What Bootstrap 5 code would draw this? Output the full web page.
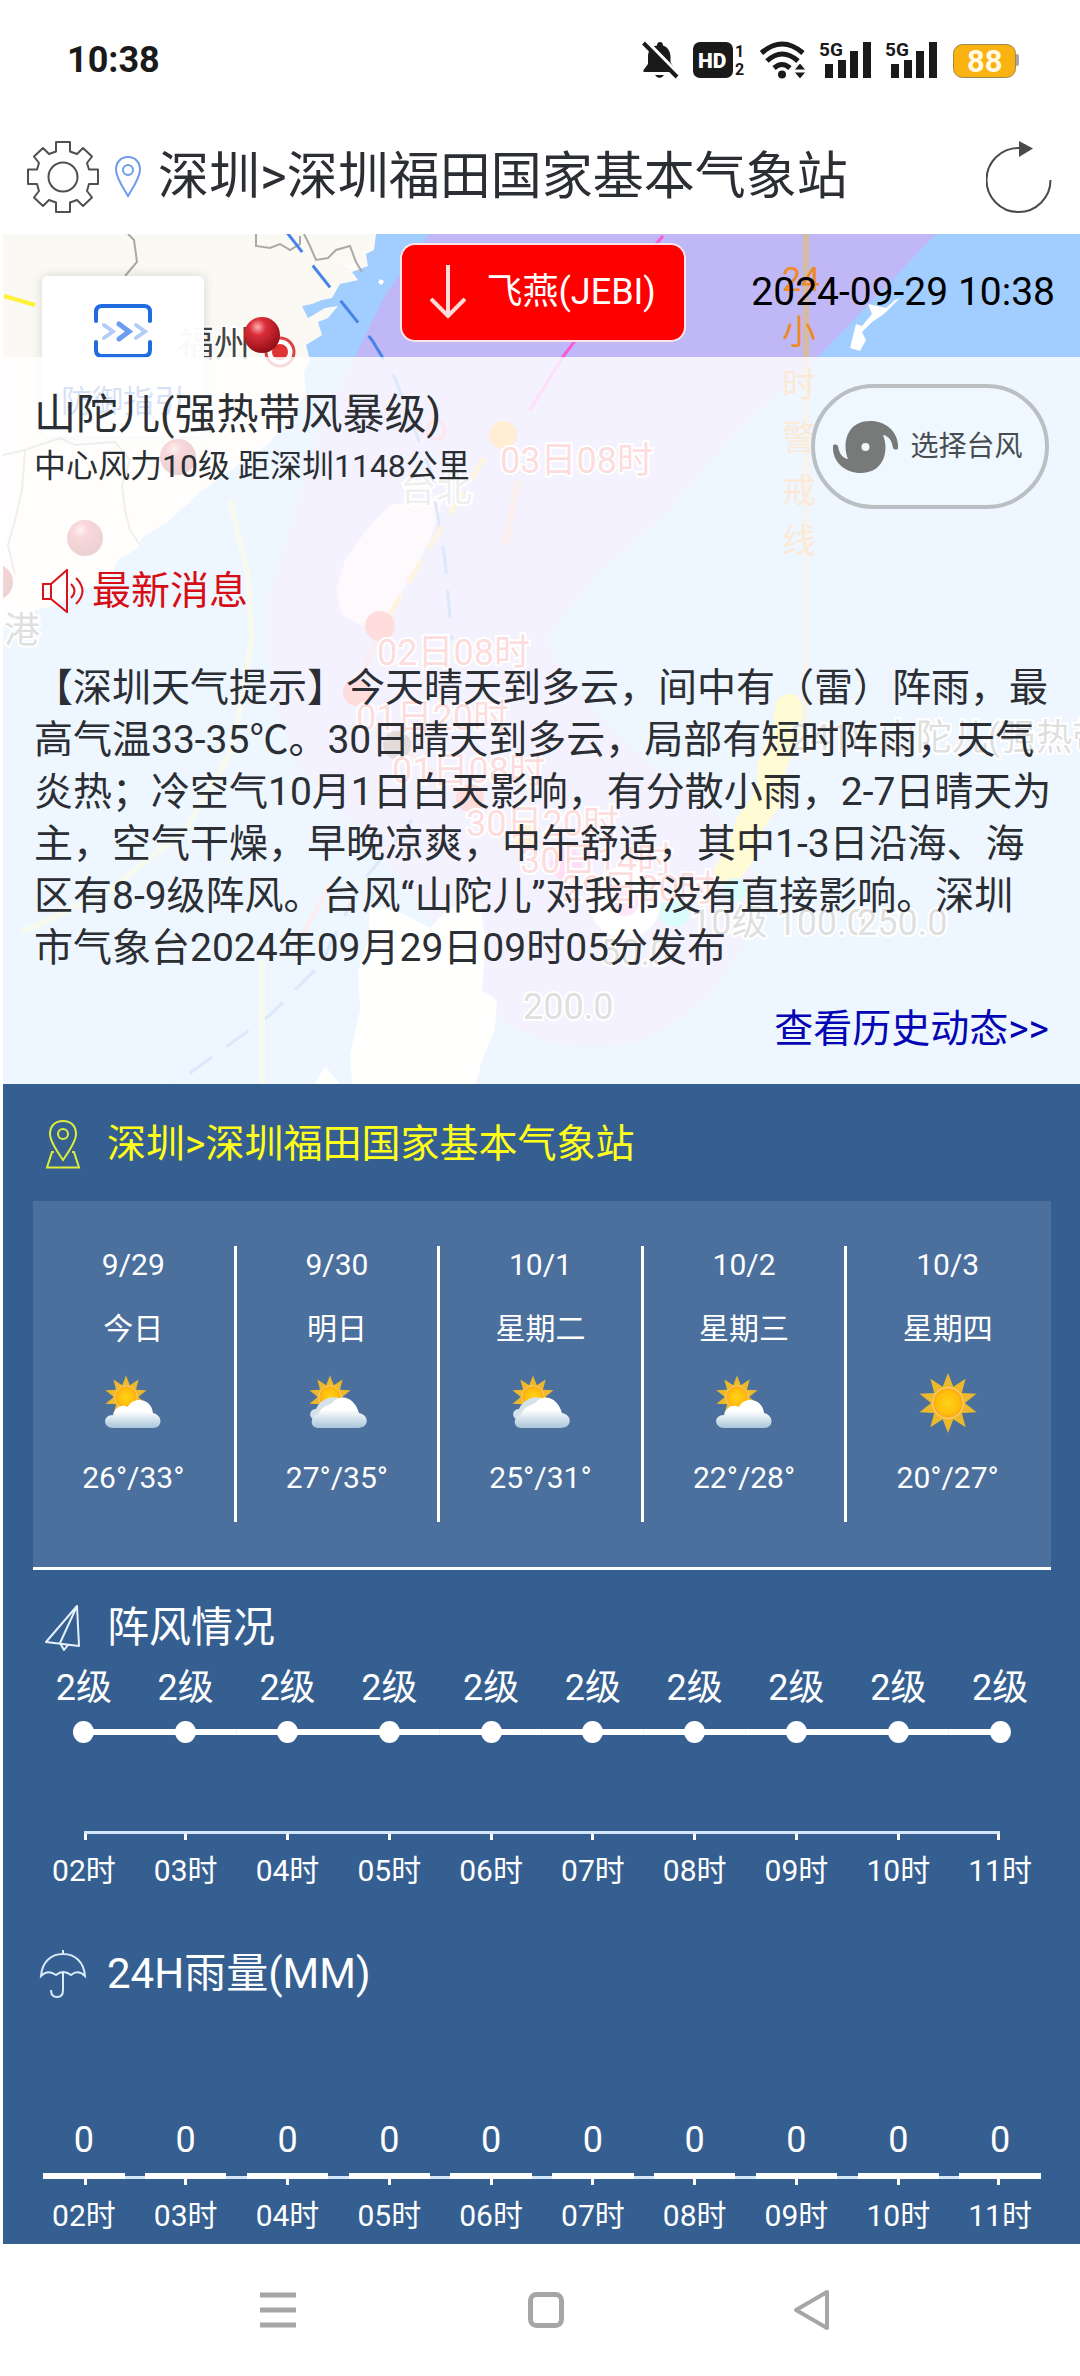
<!DOCTYPE html>
<html lang="zh-CN">
<head>
<meta charset="utf-8">
<meta name="viewport" content="width=device-width, initial-scale=1">
<title>深圳天气</title>
<link href="https://cdn.jsdelivr.net/npm/bootstrap@5.3.0/dist/css/bootstrap.min.css" rel="stylesheet">
<style>
  body { font-family: Roboto, "Noto Sans CJK SC", sans-serif; color: #2b2e33; background: #fff; }
  svg { display: block; flex: none; }
  .status-bar { min-height: 120px; padding: 0 60px 0 67px; color: #1a1a1a; }
  .clock { font-size: 36px; font-weight: 700; line-height: 44px; }
  .app-bar { min-height: 114px; padding: 0 28px 0 27px; }
  .app-title { font-size: 51px; line-height: 64px; margin: 0 0 0 17px; font-weight: 400; white-space: nowrap; }
  .bare { background: none; border: 0; padding: 0; color: inherit; }
  .app-main { margin-left: 3px; }

  .map-area { overflow: hidden; background: #a2cdff; }
  .map-art { position: absolute; inset: 0; width: 100%; height: 100%; }
  .map-head { position: relative; display: grid; grid-template-columns: 1fr auto 1fr; align-items: center; min-height: 123px; padding: 0 25px 7px 27px; }
  .storm-btn { background: #fe0000; color: #fff; border: 2px solid #ffe6e6; border-radius: 15px; min-width: 286px; min-height: 99px; padding: 0 16px 0 28px; font-size: 36px; gap: 21px; grid-column: 2; }
  .stamp { font-size: 39px; line-height: 52px; color: #000; grid-column: 3; text-align: right; white-space: nowrap; }
  .guide-card { position: absolute; left: 39px; top: 42px; width: 162px; height: 160px; border-radius: 6px; background: rgba(255,255,255,.97); box-shadow: 0 0 12px rgba(0,0,0,.15); color: #2d5fd0; font-size: 31px; line-height: 40px; padding-top: 28px; gap: 24px; text-decoration: none; }

  .news { position: relative; background: rgba(255,255,255,.81); padding: 27px 31px 29px; }
  .storm-name { font-size: 42px; line-height: 62px; font-weight: 400; margin: 0; }
  .storm-info { font-size: 32px; line-height: 40px; margin: 0; }
  .pick-btn { width: 238px; height: 125px; border: 4px solid #b9bfc2; border-radius: 63px; background: rgba(255,255,255,.1); color: #484c50; font-size: 28px; gap: 12px; padding: 0 4px 0 0; white-space: nowrap; }
  .news-head { font-size: 39px; line-height: 52px; color: #d60f16; margin: 56px 0 0; padding-left: 8px; gap: 7px; font-weight: 400; }
  .news-body { font-size: 39px; line-height: 52px; margin: 45px -8px 29px 0; }
  .news-more { font-size: 39px; line-height: 52px; color: #0505b4; text-decoration: none; }

  .board { background: #365f91; color: #fff; padding: 30px 29px 8px 30px; }
  .board-head { display: flex; align-items: center; gap: 20px; padding-left: 6px; font-size: 42px; line-height: 60px; font-weight: 400; margin: 0; }
  .place-head { font-size: 39px; color: #ffff19; margin-bottom: 27px; }
  .days { background: #4b709d; border-bottom: 3px solid #fff; padding: 45px 0; margin-bottom: 28px; font-size: 30px; line-height: 38px; }
  .day { flex: 1 1 0; border-right: 3px solid #fff; padding-bottom: 25px; }
  .day:last-child { border-right-color: transparent; }
  .day svg { margin: 23px auto 24px; }
  .day-name { margin-top: 26px; }

  .chart { display: flex; text-align: center; }
  .slot { flex: 1 1 0; position: relative; }
  .val { font-size: 36px; line-height: 44px; margin-bottom: 11px; }
  .hour { font-size: 30px; line-height: 40px; margin-top: 11px; }
  .node { height: 22px; background: linear-gradient(#fff,#fff) center / 100% 6px no-repeat; margin-bottom: 88px; }
  .node::before { content: ""; display: block; width: 21px; height: 22px; border-radius: 50%; background: #fff; margin: 0 auto; }
  .slot:first-child .node { background-position: right center; background-size: 50% 6px; }
  .slot:last-child .node { background-position: left center; background-size: 50% 6px; }
  .axis { border-top: 3px solid #d3e6fa; height: 9px; }
  .axis::before { content: ""; display: block; width: 3px; height: 6px; background: #fff; margin: 0 auto; }
  .slot:first-child .axis { margin-left: 50%; }
  .slot:first-child .axis::before { margin-left: 0; }
  .slot:last-child .axis { margin-right: 50%; }
  .slot:last-child .axis::before { margin-right: 0; }
  .rain-bar { width: 80%; height: 6px; background: #fff; margin: 0 auto -3px; position: relative; }
  .wind { padding-top: 8px; margin-bottom: 53px; }
  .rain { padding-top: 114px; }

  .nav-keys { min-height: 132px; padding-left: 11px; }
  .home-key { margin: 0 229px 0 232px; }
</style>
</head>
<body>
<header class="status-bar d-flex align-items-center justify-content-between">
  <span class="clock">10:38</span>
  <svg width="378" height="44" viewBox="642 37 378 44" font-family="Roboto, sans-serif" font-weight="700" fill="#1a1a1a">
    <path d="M648 54Q649 45 657 44.500Q657 41 660 41Q663 41 663 44.500Q670 47 670.500 55V61L675 69V71H643.500V69L648 63Z"/>
    <path d="M655 74H664Q662 77 659.500 77T655 74Z"/>
    <path d="M645 39L680 75" stroke="#fff" stroke-width="4"/>
    <path d="M643.500 42L677 76" stroke="#1a1a1a" stroke-width="4"/>
    <rect x="693" y="41" width="40" height="36" rx="7"/>
    <text x="698" y="67" font-size="21" fill="#fff" font-weight="900">HD</text>
    <text x="735" y="56" font-size="16">1</text><text x="735" y="74" font-size="16">2</text>
    <g fill="none" stroke="#1a1a1a" stroke-width="5">
      <path d="M761.500 52Q782 34 803 52"/><path d="M767 60Q782 46 798 60"/><path d="M774 67Q782 60 790 67"/>
    </g>
    <circle cx="782" cy="73.500" r="4"/><path d="M794 69L800 62L806 69ZM794 71H806L800 78Z" stroke="#fff"/>
    <text x="819" y="55" font-size="19">5G</text><path d="M825 63h8v14h-8zM838 59h8v18h-8zM850 50h8v27h-8zM863 41h8v36h-8z"/>
    <text x="885" y="55" font-size="19">5G</text><path d="M891 63h8v14h-8zM904 59h8v18h-8zM916 50h8v27h-8zM929 41h8v36h-8z"/>
    <path d="M1012 53h5q2 0 2 2v8q0 2-2 2h-5z" fill="#a8a8a8"/>
    <rect x="953.500" y="43.500" width="62" height="33" rx="9" fill="#f9b20f" stroke="#9a8a4c"/>
    <text x="967" y="71" font-size="31" fill="#fffbe8">88</text>
  </svg>
</header>

<nav class="app-bar d-flex align-items-center" aria-label="站点">
  <button class="bare" type="button" aria-label="设置">
    <svg width="72" height="72" viewBox="0 0 72 72" fill="none" stroke="#505050" stroke-width="2" stroke-linejoin="round"><path d="M29 1H43V10.500L50 13L56 7L65 15.500L60 22L62 28.500H71V43H62L60 50L65 56.500L56 65L50 59L43 61.500V71H29V61.500L22 59L16 65L7 56.500L12 50L10 43H1V28.500H10L12 22L7 15.500L16 7L22 13L29 10.500Z"/><circle cx="36" cy="36" r="14.500"/></svg>
  </button>
  <svg class="ms-3" width="26" height="42" viewBox="0 0 26 42" fill="none" stroke="#6f9be8" stroke-width="2"><path d="M13 40C9 33 1 22 1 13.500C1 6 6 1 13 1S25 6 25 13.500C25 22 17 33 13 40Z"/><circle cx="13" cy="14" r="5"/></svg>
  <h1 class="app-title">深圳&gt;深圳福田国家基本气象站</h1>
  <button class="bare ms-auto" type="button" aria-label="刷新">
    <svg width="66" height="72" viewBox="0 0 66 72"><path d="M33 7A32 32 0 1 0 64.500 39" fill="none" stroke="#4a4a4a" stroke-width="2"/><path d="M33 0L47 7.500L33 16Z" fill="#4a4a4a"/></svg>
  </button>
</nav>

<main class="app-main">
  <section class="map-area position-relative">
    <svg class="map-art" viewBox="3 234 1077 850" preserveAspectRatio="xMidYMin slice" font-family="Roboto, 'Noto Sans CJK SC', sans-serif" font-size="36">
      <defs><radialGradient id="ball" cx=".38" cy=".28" r=".75"><stop offset="0" stop-color="#ffb0b0"/><stop offset=".3" stop-color="#dc2f3a"/><stop offset="1" stop-color="#8e0d14"/></radialGradient></defs>
      <path fill="#bfb7f6" d="M429 234L385 295L355 357L320 425L290 530L268 600L270 690L300 770L370 840L440 930L500 1020Q560 1060 640 1040Q735 1000 760 900Q760 850 690 790Q600 740 545 640L600 570L665 515L720 450L765 405L818 357L936 234Z"/>
      <path fill="#fbf9f3" d="M3 234H376L374 250L366 254L368 266L352 272L358 280L340 284L332 298L322 300L312 304L302 306L308 318L325 308L338 306L328 318L318 322L322 335L306 345L310 360L304 372L306 395L296 408L286 424L266 446L240 462L232 470L200 492L170 520L142 538L138 548L118 560L108 580L84 590L52 606L30 612L12 622L3 626Z"/>
      <path fill="#f3dcf2" d="M446 492L425 500L390 505L370 525L345 560L336 590L342 615L362 626L388 618L412 575L430 540Z"/>
      <path fill="#fdfcfa" d="M370 905L400 912L430 928L445 912L478 895L486 940L482 990L497 1000L495 1030L482 1060L476 1084H352L350 1055L360 1010L358 970L368 940ZM315 1084L325 1066L340 1084Z"/>
      <path fill="#fff" d="M895 300L886 308L868 304L872 314L862 326L856 324L852 340L850 348L860 351L866 340L862 332L872 322L884 314L900 298ZM380 279l4 2-2 4-4-2zM342 262l8 4 6-4v8l-8-2z"/>
      <g fill="none" stroke="#aaa9a6" stroke-width="2"><path d="M128 234L134 240L137 262L125 276"/><path d="M256 234V246L270 248L280 244L290 250L300 244V236M304 234L310 246L316 260L328 258L336 250L350 246L356 262L362 272"/><path d="M3 455L25 450L60 438L75 445L115 442L130 460L122 485L125 510L130 530L140 545M25 450L22 490L15 520L8 545L15 575"/></g>
      <path d="M4 296L35 305" stroke="#fff13a" stroke-width="4"/>
      <path d="M285 230L310 262L340 300L372 340L395 378L430 470L445 560L452 640M412 820L360 885L320 965L270 1015L175 1084" fill="none" stroke="#4583e6" stroke-width="3" stroke-dasharray="28 17"/>
      <path d="M230 500L247 570L252 640L232 750L185 830L110 890L22 932M262 960V1084" fill="none" stroke="#d3e8a8" stroke-width="6"/>
      <path d="M806 234V760" stroke="#e8c060" stroke-opacity=".55" stroke-width="6"/>
      <path d="M663 236Q590 320 562 358L530 410" fill="none" stroke="#fb59d8" stroke-width="3"/>
      <path d="M484 458L440 530L385 622" fill="none" stroke="#fdc465" stroke-width="5" stroke-dasharray="26 14"/>
      <path d="M518 480L505 545" stroke="#f4b1b1" stroke-width="7"/>
      <path d="M380 626L357 692L397 745L470 798L525 832L565 865M330 885L300 940" fill="none" stroke="#f7a0b0" stroke-width="4"/>
      <circle cx="503" cy="435" r="14" fill="#ffa21f"/>
      <g fill="#ff4a4a"><circle cx="380" cy="626" r="15"/><circle cx="357" cy="692" r="14"/><circle cx="470" cy="798" r="14"/></g>
      <circle cx="397" cy="745" r="14" fill="#704040"/><circle cx="525" cy="832" r="15" fill="#ffb032"/>
      <circle cx="566" cy="864" r="16" fill="#ff52cc"/><circle cx="625" cy="902" r="36" fill="#fff"/>
      <circle cx="625" cy="902" r="14" fill="#ff8ad8"/>
      <path d="M789 708L786 735L772 765L770 795L749 825L740 855L728 872" fill="none" stroke="#ffea20" stroke-width="28" stroke-linecap="round"/>
      <circle cx="675" cy="912" r="15" fill="#40f0f0"/><circle cx="735" cy="890" r="12" fill="#40f0f0"/>
      <g fill="url(#ball)"><circle cx="178" cy="457" r="18"/><circle cx="85" cy="538" r="18"/><circle cx="-5" cy="582" r="18"/></g>
      <text x="178" y="357" fill="#444" stroke="#fff" stroke-width="4" paint-order="stroke">福州</text>
      <g fill="#555" stroke="#fff" stroke-width="4" paint-order="stroke"><text x="4" y="643">港</text><text x="400" y="502" fill="#aaa">台北</text><text x="790" y="750">2418 山陀儿(强热带风暴级)</text><text x="691" y="935">10级 100.0</text><text x="857" y="935">250.0</text><text x="600" y="965">50.0</text><text x="523" y="1019">200.0</text></g>
      <circle cx="280" cy="352" r="14" fill="#fff" stroke="#dc4444" stroke-width="3"/><circle cx="280" cy="352" r="8" fill="#df3232"/><circle cx="262" cy="335" r="18" fill="url(#ball)"/>
      <circle cx="436" cy="430" r="9" fill="none" stroke="#f08aa8" stroke-width="4"/>
      <g fill="#f04848" stroke="#fff" stroke-width="4" paint-order="stroke"><text x="500" y="473">03日08时</text><text x="377" y="665">02日08时</text><text x="356" y="730">01日20时</text><text x="392" y="783">01日08时</text><text x="466" y="836">30日20时</text><text x="520" y="873">30日14时</text><text x="562" y="901">29日20时</text></g>
      <g fill="#ef8a23" font-size="34" text-anchor="middle"><text x="801" y="291">24</text><text x="799" y="344">小</text><text x="799" y="397">时</text><text x="799" y="450">警</text><text x="799" y="503">戒</text><text x="799" y="553">线</text></g>
    </svg>

    <a href="#" class="guide-card d-flex flex-column align-items-center">
      <svg width="58" height="54" viewBox="0 0 58 54" fill="none" stroke-width="4" stroke-linecap="round"><path d="M2 17V8Q2 2 8 2H50Q56 2 56 8V17M2 38V46Q2 52 8 52H50Q56 52 56 46V38" stroke="#1f6ce0"/><path d="M10 21L19 27.500L10 34M42 21L51 27.500L42 34" stroke="#b4cdf8"/><path d="M25 20L35 27.500L25 35" stroke="#6b9cf2" stroke-width="5"/></svg>
      <span>防御指引</span>
    </a>

    <div class="map-head">
      <button type="button" class="storm-btn d-flex align-items-center justify-content-start">
        <svg width="36" height="54" viewBox="0 0 36 54" fill="none" stroke="#ffdcdc" stroke-width="4"><path d="M18 0V51M1 34L18 51L35 34"/></svg>
        <span>飞燕(JEBI)</span>
      </button>
      <time class="stamp" datetime="2024-09-29T10:38">2024-09-29 10:38</time>
    </div>

    <div class="news">
      <div class="d-flex justify-content-between align-items-start">
        <div>
          <h2 class="storm-name">山陀儿(强热带风暴级)</h2>
          <p class="storm-info">中心风力10级 距深圳1148公里</p>
        </div>
        <button type="button" class="pick-btn d-flex align-items-center justify-content-center">
          <svg width="65" height="52" viewBox="0 0 65 52"><path fill="#777a79" d="M37 0C54 0 66 12 65 27C65 29 61 29 60 27C59 20 56 15 50 14C56 28 52 52 28 52C11 52-1 40 0 25C0 23 4 23 5 25C6 32 9 37 15 38C9 24 13 0 37 0Z"/><circle cx="32.500" cy="26" r="4" fill="#f4f8fd"/></svg>
          <span>选择台风</span>
        </button>
      </div>
      <h3 class="news-head d-flex align-items-center">
        <svg width="43" height="44" viewBox="0 0 43 44" fill="none" stroke="#d6141a" stroke-width="2"><path d="M1 15H9V30H1ZM9 15L25 1V43L9 30M29 15Q36 22 29 29M34 9Q47 22 34 35"/></svg>
        <span>最新消息</span>
      </h3>
      <p class="news-body">【深圳天气提示】今天晴天到多云，间中有（雷）阵雨，最高气温33-35℃。30日晴天到多云，局部有短时阵雨，天气炎热；冷空气10月1日白天影响，有分散小雨，2-7日晴天为主，空气干燥，早晚凉爽，中午舒适，其中1-3日沿海、海区有8-9级阵风。台风“山陀儿”对我市没有直接影响。深圳<span class="d-inline-block">市气象台</span>2024年09月29日09时05分发布</p>
      <div class="text-end"><a class="news-more d-block" href="#">查看历史动态&gt;&gt;</a></div>
    </div>
  </section>

  <section class="board">
    <svg width="0" height="0" class="position-absolute" aria-hidden="true">
      <defs>
        <radialGradient id="sunG"><stop offset="0" stop-color="#ffd21a"/><stop offset=".7" stop-color="#ffbe0a"/><stop offset="1" stop-color="#f9a51c"/></radialGradient>
        <linearGradient id="cloudG" x2="0" y2="1"><stop offset=".4" stop-color="#fff"/><stop offset="1" stop-color="#a9c6da"/></linearGradient>
        <g id="sun"><path fill="#edb92c" d="M0-30L5.300-16.200L17.600-24.300L13.800-10L28.500-9.300L17 0L28.500 9.300L13.800 10L17.600 24.300L5.300 16.200L0 30L-5.300 16.200L-17.600 24.300L-13.800 10L-28.500 9.300L-17 0L-28.500-9.300L-13.800-10L-17.600-24.300L-5.300-16.200Z"/><circle r="15.500" fill="url(#sunG)" stroke="#ffd98a"/></g>
        <symbol id="sunny" viewBox="0 0 64 64"><use href="#sun" x="32" y="32"/></symbol>
        <symbol id="cloudy" viewBox="0 0 64 64"><g transform="translate(25 26) scale(.72)"><use href="#sun"/></g><path fill="url(#cloudG)" d="M12 57C2 57 1 44 12 44C14 36 21 33 27 36C31 26 50 26 52 42C62 44 62 57 52 57Z"/></symbol>
        <symbol id="cloudier" viewBox="0 0 64 64"><g transform="translate(25 26) scale(.72)"><use href="#sun"/></g><path fill="#d5e2ea" d="M8 48C3 45 5 38 11 38C14 30 24 24 34 27L20 48Z"/><path fill="url(#cloudG)" d="M14 57C4 57 5 45 13 44C17 33 25 36 30 29C40 22 51 30 54 42C65 44 64 57 53 57Z"/></symbol>
      </defs>
    </svg>

    <h2 class="board-head place-head">
      <svg width="48" height="50" viewBox="0 0 48 50" fill="none" stroke="#dced3c" stroke-width="2"><path d="M24 41C20 35 11 23 11 15C11 7 16 2 24 2S37 7 37 15C37 23 28 35 24 41Z"/><circle cx="24" cy="15" r="5"/><path d="M15 33H13L8 48.500H40L35 33H33"/></svg>
      <span>深圳&gt;深圳福田国家基本气象站</span>
    </h2>

    <div class="days d-flex text-center">
      <div class="day"><div>9/29</div><div class="day-name">今日</div><svg width="64" height="64"><use href="#cloudy"/></svg><div>26°/33°</div></div>
      <div class="day"><div>9/30</div><div class="day-name">明日</div><svg width="64" height="64"><use href="#cloudier"/></svg><div>27°/35°</div></div>
      <div class="day"><div>10/1</div><div class="day-name">星期二</div><svg width="64" height="64"><use href="#cloudier"/></svg><div>25°/31°</div></div>
      <div class="day"><div>10/2</div><div class="day-name">星期三</div><svg width="64" height="64"><use href="#cloudy"/></svg><div>22°/28°</div></div>
      <div class="day"><div>10/3</div><div class="day-name">星期四</div><svg width="64" height="64"><use href="#sunny"/></svg><div>20°/27°</div></div>
    </div>

    <h2 class="board-head">
      <svg width="48" height="46" viewBox="0 0 48 46" fill="none" stroke="#e4f0fc" stroke-width="2" stroke-linejoin="round"><path d="M38 1L7 37L40 41ZM38 1L21 38L25 45L29 40"/></svg>
      <span>阵风情况</span>
    </h2>
    <div class="chart wind">
      <div class="slot"><div class="val">2级</div><div class="node"></div><div class="axis"></div><div class="hour">02时</div></div>
      <div class="slot"><div class="val">2级</div><div class="node"></div><div class="axis"></div><div class="hour">03时</div></div>
      <div class="slot"><div class="val">2级</div><div class="node"></div><div class="axis"></div><div class="hour">04时</div></div>
      <div class="slot"><div class="val">2级</div><div class="node"></div><div class="axis"></div><div class="hour">05时</div></div>
      <div class="slot"><div class="val">2级</div><div class="node"></div><div class="axis"></div><div class="hour">06时</div></div>
      <div class="slot"><div class="val">2级</div><div class="node"></div><div class="axis"></div><div class="hour">07时</div></div>
      <div class="slot"><div class="val">2级</div><div class="node"></div><div class="axis"></div><div class="hour">08时</div></div>
      <div class="slot"><div class="val">2级</div><div class="node"></div><div class="axis"></div><div class="hour">09时</div></div>
      <div class="slot"><div class="val">2级</div><div class="node"></div><div class="axis"></div><div class="hour">10时</div></div>
      <div class="slot"><div class="val">2级</div><div class="node"></div><div class="axis"></div><div class="hour">11时</div></div>
    </div>

    <h2 class="board-head">
      <svg width="48" height="48" viewBox="0 0 48 48" fill="none" stroke="#d9eafa" stroke-width="2"><path d="M24 0V4M2 26C3 12 12 4 24 4S45 12 46 26Q39 19 32 25Q24 19 17 25Q9 19 2 26ZM24 23V40Q24 47 18 47T12 40"/></svg>
      <span>24H雨量(MM)</span>
    </h2>
    <div class="chart rain">
      <div class="slot"><div class="val">0</div><div class="rain-bar"></div><div class="axis"></div><div class="hour">02时</div></div>
      <div class="slot"><div class="val">0</div><div class="rain-bar"></div><div class="axis"></div><div class="hour">03时</div></div>
      <div class="slot"><div class="val">0</div><div class="rain-bar"></div><div class="axis"></div><div class="hour">04时</div></div>
      <div class="slot"><div class="val">0</div><div class="rain-bar"></div><div class="axis"></div><div class="hour">05时</div></div>
      <div class="slot"><div class="val">0</div><div class="rain-bar"></div><div class="axis"></div><div class="hour">06时</div></div>
      <div class="slot"><div class="val">0</div><div class="rain-bar"></div><div class="axis"></div><div class="hour">07时</div></div>
      <div class="slot"><div class="val">0</div><div class="rain-bar"></div><div class="axis"></div><div class="hour">08时</div></div>
      <div class="slot"><div class="val">0</div><div class="rain-bar"></div><div class="axis"></div><div class="hour">09时</div></div>
      <div class="slot"><div class="val">0</div><div class="rain-bar"></div><div class="axis"></div><div class="hour">10时</div></div>
      <div class="slot"><div class="val">0</div><div class="rain-bar"></div><div class="axis"></div><div class="hour">11时</div></div>
    </div>
  </section>
</main>

<footer class="nav-keys d-flex align-items-center justify-content-center">
  <button class="bare" type="button" aria-label="菜单"><svg width="36" height="36" viewBox="0 0 36 36" stroke="#a6a6a6" stroke-width="5"><path d="M0 3H36M0 18H36M0 33H36"/></svg></button>
  <button class="bare home-key" type="button" aria-label="主页"><svg width="36" height="36" viewBox="0 0 36 36" fill="none" stroke="#a6a6a6" stroke-width="5"><rect x="2.500" y="2.500" width="31" height="31" rx="6"/></svg></button>
  <button class="bare" type="button" aria-label="返回"><svg width="38" height="42" viewBox="0 0 38 42" fill="none" stroke="#a6a6a6" stroke-width="4" stroke-linejoin="round"><path d="M3 21L34 3V39Z"/></svg></button>
</footer>
<script src="https://cdn.jsdelivr.net/npm/bootstrap@5.3.0/dist/js/bootstrap.bundle.min.js"></script>
</body>
</html>
